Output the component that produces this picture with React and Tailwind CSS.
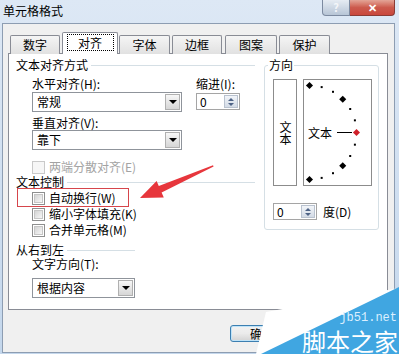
import React from "react";

const tabs = [
  { label: "数字", cls: "ml-[2px] w-[50px]" },
  { label: "对齐", cls: "ml-[2px] w-[56px]", active: true },
  { label: "字体", cls: "ml-[1px] w-[51px]" },
  { label: "边框", cls: "ml-[2px] w-[50px]" },
  { label: "图案", cls: "ml-[3px] w-[52px]" },
  { label: "保护", cls: "ml-[2px] w-[51px]" },
];

// 15 degree steps around the orientation half circle
const dots = Array.from({ length: 13 }, (_, k) => {
  const a = ((-90 + 15 * k) * Math.PI) / 180;
  return { k, x: 5.5 + 47 * Math.cos(a), y: 52.5 + 47 * Math.sin(a) };
});

function GroupTitle({ children, line = "flex-1" }) {
  return (
    <div className="flex items-center h-[14px]">
      <span className="leading-[14px]">{children}</span>
      <span className={`${line} h-px bg-[#d5dfe5] ml-[3px] mt-[1px]`} />
    </div>
  );
}

function Checkbox({ disabled }) {
  return (
    <span
      className={
        disabled
          ? "w-[13px] h-[13px] shrink-0 border border-[#c9c9c9] bg-[#f6f6f6]"
          : "w-[13px] h-[13px] shrink-0 border border-[#8e8f8f] p-px bg-white"
      }
    >
      {!disabled && (
        <span className="block w-full h-full bg-gradient-to-br from-[#d4d4d4] to-[#f7f7f7] border border-[#c6c6c6]" />
      )}
    </span>
  );
}

function CheckRow({ label, disabled, h = "h-[16px]" }) {
  return (
    <div className={`flex items-center gap-[4px] ${h}`}>
      <Checkbox disabled={disabled} />
      <span className={disabled ? "leading-[14px] text-[#a3a3a3]" : "leading-[14px]"}>
        {label}
      </span>
    </div>
  );
}

function Select({ value, width }) {
  return (
    <div className={`${width} h-[20px] border border-[#8f949b] bg-white flex items-center`}>
      <span className="flex-1 pl-[4px] leading-[14px]">{value}</span>
      <span className="w-[15px] h-[16px] mr-px border border-[#b0b0b0] bg-gradient-to-b from-[#f7f7f7] to-[#d6d6d6] flex items-center justify-center">
        <span className="w-0 h-0 border-x-[4px] border-x-transparent border-t-[4px] border-t-black" />
      </span>
    </div>
  );
}

function Spin() {
  return (
    <div className="w-[44px] h-[17px] border border-[#a5a5a5] bg-white flex">
      <span className="flex-1 pl-[3px] leading-[15px]">0</span>
      <span className="w-[14px] m-px border border-[#b9c2cf] bg-gradient-to-b from-[#f2f5f9] to-[#d3dbe6] flex flex-col items-center justify-center gap-[2px]">
        <span className="w-0 h-0 border-x-[3px] border-x-transparent border-b-[3px] border-b-[#4e6386]" />
        <span className="w-0 h-0 border-x-[3px] border-x-transparent border-t-[3px] border-t-[#4e6386]" />
      </span>
    </div>
  );
}

export default function App() {
  return (
    <div className="relative w-[399px] h-[354px] overflow-hidden bg-gradient-to-b from-[#dde8f5] to-[#c4d7ec] text-black text-[12px] font-['Noto_Sans_CJK_SC','Liberation_Sans',sans-serif]">
      <div className="h-[23px] flex justify-between items-start">
        <span className="pl-[3px] pt-[4px] leading-[14px]">单元格格式</span>
        <div className="flex mr-[4px]">
          <span className="w-[28px] h-[16px] rounded-bl-[4px] border border-t-0 border-[#7c8aa0] bg-gradient-to-b from-[#e6ecf3] to-[#b7c5d6] flex items-center justify-center text-[11px] font-bold text-[#f4f6f9] leading-none">
            ?
          </span>
          <span className="w-[45px] h-[16px] rounded-br-[4px] border border-t-0 border-l-0 border-[#8a3b35] bg-gradient-to-b from-[#e3a497] via-[#cc5a4d] to-[#c9473c] flex items-center justify-center text-[11px] font-bold text-white leading-none">
            ✕
          </span>
        </div>
      </div>

      <div className="ml-[2px] mr-[4px] h-[330px] border border-[#8d9db2] bg-[#f0f0f0] pl-[5px] pt-[8px]">
        <div className="flex items-end h-[22px]">
          {tabs.map((t) =>
            t.active ? (
              <div
                key={t.label}
                className={`${t.cls} relative z-10 h-[22px] border border-b-0 border-[#898c95] rounded-t-[2px] bg-white flex justify-center pt-px`}
              >
                <span className="w-[47px] h-[17px] border border-dotted border-black flex items-center justify-center leading-[14px]">
                  {t.label}
                </span>
              </div>
            ) : (
              <div
                key={t.label}
                className={`${t.cls} h-[19px] border border-b-0 border-[#898c95] rounded-t-[2px] bg-gradient-to-b from-[#f5f5f5] to-[#e1e1e1] flex items-center justify-center leading-[14px]`}
              >
                {t.label}
              </div>
            )
          )}
        </div>

        <div className="-mt-px w-[380px] h-[257px] border border-[#898c95] bg-white flex items-start">
          <div className="w-[246px] pl-[7px] pt-[4px]">
            <GroupTitle>文本对齐方式</GroupTitle>
            <div className="flex pl-[16px]">
              <div className="w-[150px]">
                <div className="mt-[5px] leading-[14px]">水平对齐(H):</div>
                <div className="mt-px">
                  <Select value="常规" width="w-[150px]" />
                </div>
                <div className="mt-[4px] leading-[14px]">垂直对齐(V):</div>
                <Select value="靠下" width="w-[150px]" />
              </div>
              <div className="ml-[14px]">
                <div className="mt-[5px] leading-[14px]">缩进(I):</div>
                <div className="mt-[2px]">
                  <Spin />
                </div>
              </div>
            </div>
            <div className="pl-[16px] mt-[10px]">
              <CheckRow label="两端分散对齐(E)" disabled h="h-[14px]" />
            </div>
            <div className="mt-px">
              <GroupTitle>文本控制</GroupTitle>
            </div>
            <div className="pl-[16px] mt-px">
              <CheckRow label="自动换行(W)" />
              <CheckRow label="缩小字体填充(K)" />
              <CheckRow label="合并单元格(M)" />
            </div>
            <div className="mt-[5px]">
              <GroupTitle line="w-[68px]">从右到左</GroupTitle>
            </div>
            <div className="pl-[16px]">
              <div className="leading-[14px]">文字方向(T):</div>
              <div className="mt-[7px]">
                <Select value="根据内容" width="w-[103px]" />
              </div>
            </div>
          </div>

          <div className="relative ml-[9px] mt-[11px] w-[115px] h-[165px] border border-[#d5dfe5] rounded-[3px] pl-[8px] pt-[13px]">
            <span className="absolute -top-[8px] left-[3px] bg-white px-px leading-[14px]">方向</span>
            <div className="flex gap-[6px]">
              <div className="w-[24px] h-[107px] border border-[#8c8c8c] flex items-center justify-center">
                <span className="[writing-mode:vertical-rl] leading-[14px] tracking-[0px]">文本</span>
              </div>
              <div className="relative w-[69px] h-[107px] border border-[#8c8c8c] flex items-center pl-[4px]">
                <svg className="absolute inset-0" width="67" height="105">
                  <line x1="33" y1="52.5" x2="48" y2="52.5" stroke="#000" strokeWidth="1" />
                  {dots.map((d) =>
                    d.k % 3 === 0 ? (
                      <rect
                        key={d.k}
                        x={d.x - 2.5}
                        y={d.y - 2.5}
                        width="5"
                        height="5"
                        fill={d.k === 6 ? "#d0202a" : "#000"}
                        transform={`rotate(45 ${d.x} ${d.y})`}
                      />
                    ) : (
                      <rect key={d.k} x={d.x - 1} y={d.y - 1} width="2" height="2" fill="#000" />
                    )
                  )}
                </svg>
                <span className="relative leading-[14px] mt-px">文本</span>
              </div>
            </div>
            <div className="flex items-center mt-[17px]">
              <Spin />
              <span className="ml-[6px] leading-[14px]">度(D)</span>
            </div>
          </div>
        </div>

        <div className="flex mt-[15px] ml-[222px]">
          <button className="w-[64px] h-[17px] border border-[#3c7fb1] rounded-[3px] bg-gradient-to-b from-[#f2f2f2] via-[#ebebeb] to-[#d3d3d3] shadow-[inset_0_0_0_1px_#bfe3f8] flex items-center justify-center leading-[14px]">
            确定
          </button>
        </div>
      </div>

      <svg className="absolute inset-0 pointer-events-none" width="399" height="354">
        <rect x="17.5" y="188.5" width="111" height="18" fill="none" stroke="#d6454b" strokeWidth="1" />
        <polygon
          points="140,198 156.6,181 158.8,186 213,165.3 213.6,166.6 161.6,192.4 163.8,197.6"
          fill="#e7363c"
        />
        <polygon points="266,312 399,288 399,354 256,354" fill="#ffffff" />
        <polygon points="399,287 399,354 261,354" fill="#40a6e1" />
      </svg>
      <span className="absolute right-[2px] top-[311px] text-[12px] leading-[14px] text-[#dcefff] font-['Liberation_Mono',monospace]">
        jb51.net
      </span>
      <span className="absolute right-[1px] top-[328px] text-[24px] leading-[25px] text-white">
        脚本之家
      </span>
    </div>
  );
}
